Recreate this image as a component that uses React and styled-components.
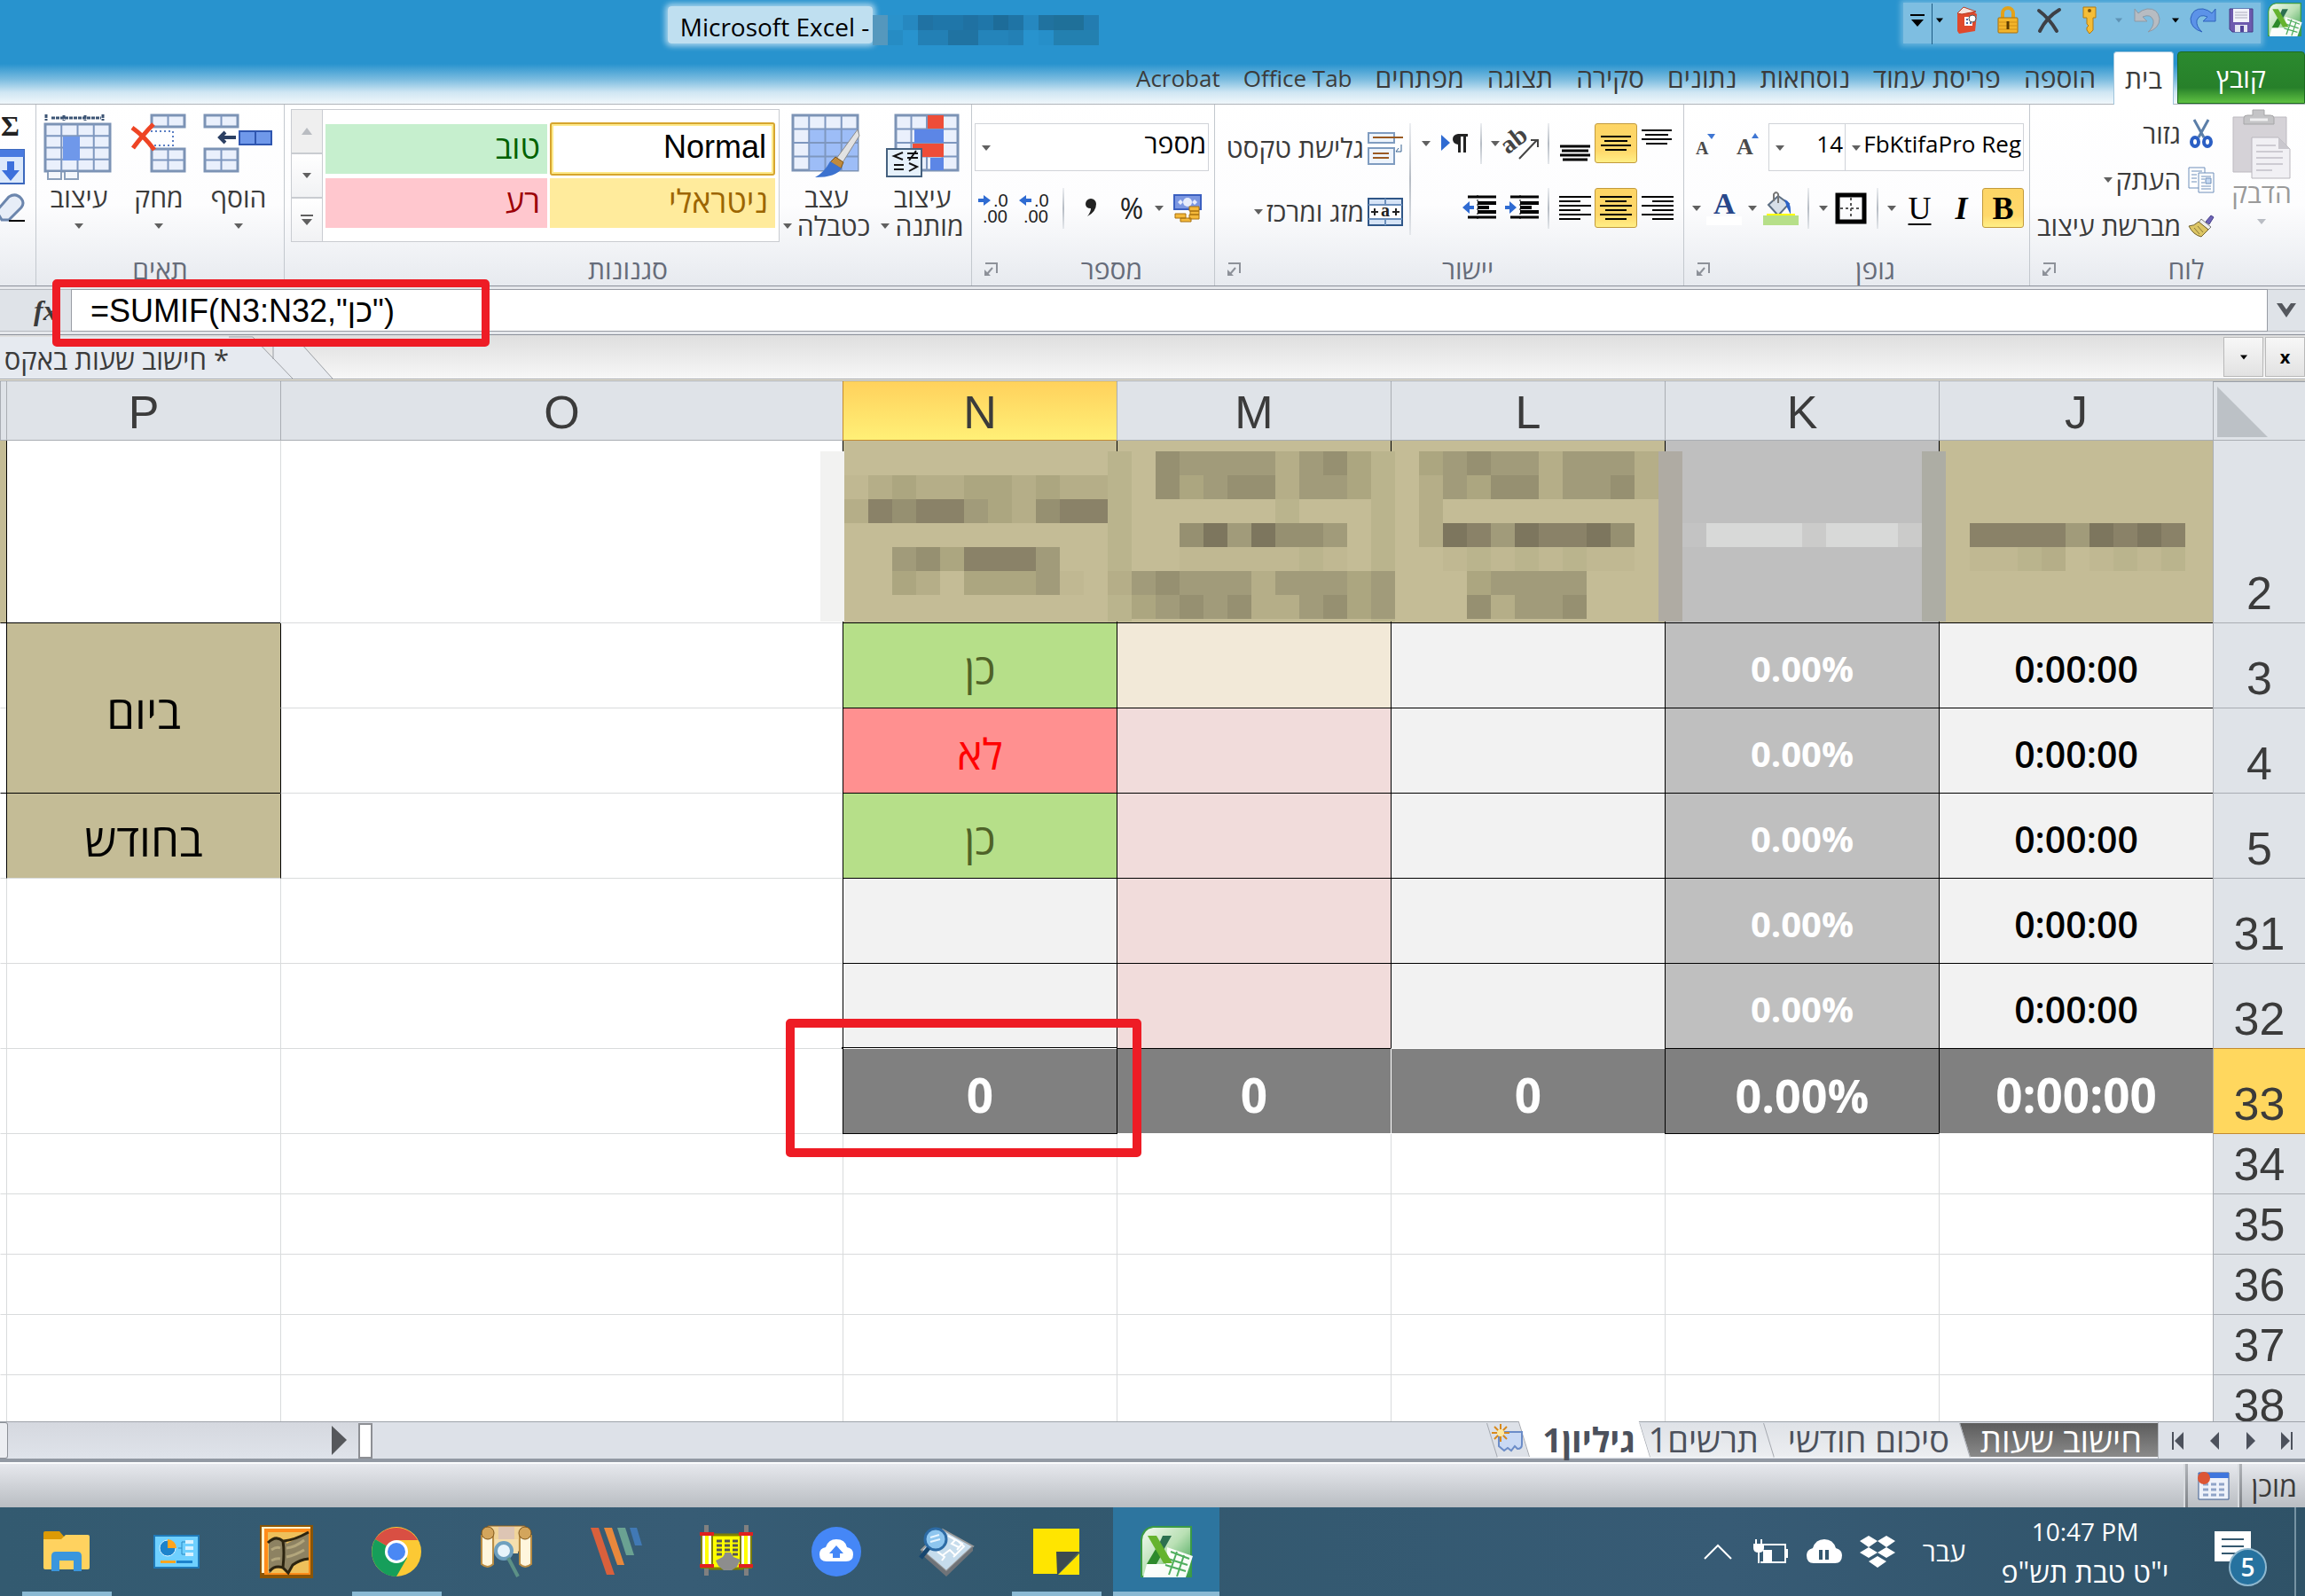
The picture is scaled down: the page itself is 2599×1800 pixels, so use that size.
import styled, { ThemeProvider, createGlobalStyle, css } from "styled-components";

// Theme definition
const theme = {
  ui: '"Open Sans", "Noto Sans", sans-serif',
  grid: '"Liberation Sans", Arial, sans-serif',
  blue: "#2893ce",
  chrome: "#dfe3e8",
  line: "#a9adb3",
  gridLine: "#d9dbdc",
  text: "#3b3b3b",
  tan: "#c4bc96",
  mark: "#ee1c25",
  orange: "#c28a30",
};

// Global styles
const GlobalStyle = createGlobalStyle`
  * {
    margin: 0;
    padding: 0;
    box-sizing: border-box;
  }

  body {
    font-family: ${(props) => props.theme.ui};
    background: #ffffff;
    overflow: hidden;
  }

  button, input, select {
    font: inherit;
    color: inherit;
    border: none;
    background: none;
    outline: none;
  }

  svg {
    display: block;
    flex: none;
    direction: ltr;
    overflow: visible;
  }
`;

const Window = styled.div`
  height: 100vh;
  display: flex;
  flex-direction: column;
  color: ${(props) => props.theme.text};
  font-size: 30px;
  line-height: 32px;
`;

/* ---------- title bar and tabs ---------- */

const Top = styled.header`
  flex: none;
  background: linear-gradient(${(props) => props.theme.blue} 72px, #7dbde0 90px, #cfe6f3 104px, #f0f7fb 117px);
`;

const TitleBar = styled.div`
  height: 58px;
  display: flex;
  align-items: flex-start;
  padding: 3px 4px 0 0;
`;

const QuickBar = styled.div`
  height: 46px;
  display: flex;
  align-items: center;
  margin-right: 8px;
  padding-bottom: 6px;
  background: rgba(255, 255, 255, 0.4);
  box-shadow: 0 0 6px 3px rgba(255, 255, 255, 0.3);
`;

const QuickButton = styled.button`
  width: ${(props) => props.$w}px;
  height: 38px;
  display: flex;
  align-items: center;
  justify-content: center;
`;

const QuickRule = styled.span`
  width: 1px;
  height: 46px;
  margin: 8px 0 0;
  background: #1d5c83;
`;

const TitleArea = styled.div`
  flex: 1;
  direction: ltr;
  display: flex;
  justify-content: center;
  padding: 4px 154px 0 0;
`;

const Title = styled.h1`
  height: 42px;
  padding: 6px 4px 0 14px;
  font-size: 28px;
  font-weight: 400;
  line-height: 34px;
  color: #000000;
  background: rgba(255, 255, 255, 0.7);
  box-shadow: 0 0 6px 3px rgba(255, 255, 255, 0.6);
  border-radius: 4px;
`;

const TitleMosaic = styled.svg`
  margin-top: 10px;
`;

const TabRow = styled.nav`
  display: flex;
  height: 60px;
  border-bottom: 1px solid #b0b4ba;
`;

const FileTab = styled.button`
  width: 144px;
  height: 59px;
  color: #ffffff;
  border: 1px solid #1d6a21;
  border-radius: 4px 4px 0 0;
  background: linear-gradient(#2b8a2f, #27802a 70%, #5fc142);
`;

const RibbonTab = styled.button`
  padding: 0 13px;
  height: 60px;
  white-space: nowrap;
  font-size: ${(props) => (props.$latin ? 26 : 30)}px;
  ${(props) =>
    props.$active &&
    css`
      width: 68px;
      margin: 0 4px 0 7px;
      background: #ffffff;
      border: 1px solid #9fc4dc;
      border-bottom: none;
      border-radius: 4px 4px 0 0;
      padding: 0;
    `}
`;

/* ---------- ribbon ---------- */

const Ribbon = styled.section`
  flex: none;
  display: flex;
  height: 205px;
  overflow: hidden;
  background: linear-gradient(#ffffff 0%, #fdfdfe 55%, #e7eaef 100%);
  border-bottom: 1px solid #8b909a;
`;

const Group = styled.section`
  flex: none;
  width: ${(props) => props.$w}px;
  display: flex;
  flex-direction: column;
  border-left: 1px solid #c3c8ce;
`;

const GroupBody = styled.div`
  flex: 1;
  min-height: 0;
  display: flex;
  padding: ${(props) => props.$pad || "0"};
`;

const GroupFoot = styled.footer`
  height: 36px;
  display: flex;
  align-items: center;
  color: #666c7a;

  span {
    flex: 1;
    text-align: center;
  }
`;

const Launcher = styled.button`
  width: 42px;
  height: 30px;
  display: flex;
  align-items: center;
  justify-content: center;
`;

const Stack = styled.div`
  display: flex;
  flex-direction: column;
  gap: ${(props) => props.$gap || 0}px;
  padding-top: ${(props) => props.$top || 0}px;
`;

const ToolRow = styled.div`
  height: ${(props) => props.$h || 45}px;
  display: flex;
  align-items: flex-start;
`;

const Tool = styled.button`
  flex: none;
  width: ${(props) => props.$w || 46}px;
  height: 45px;
  display: flex;
  align-items: center;
  justify-content: center;
  ${(props) =>
    props.$on &&
    css`
      background: linear-gradient(#fdd565, #ffd86b 70%, #ffef86);
      border: 1px solid #c29a3c;
      border-radius: 3px;
    `}
`;

const Rule = styled.span`
  flex: none;
  width: 2px;
  height: ${(props) => props.$h || 46}px;
  margin: 0 7px;
  background: linear-gradient(#eceef1, #b6bcc4, #e4e7eb);
`;

const BigButton = styled.button`
  width: ${(props) => props.$w}px;
  display: flex;
  flex-direction: column;
  align-items: center;
  padding-top: ${(props) => props.$top || 11}px;
  color: ${(props) => (props.$off ? "#9a9a9a" : props.theme.text)};
  white-space: nowrap;
`;

const BigArt = styled.span`
  height: 78px;
`;

const BigLine = styled.span`
  height: 32px;
  display: flex;
  align-items: center;
  gap: 6px;
`;

const TextButton = styled.button`
  height: 52px;
  display: flex;
  align-items: center;
  gap: 4px;
  white-space: nowrap;
`;

const IconBox = styled.span`
  width: 38px;
  display: flex;
  justify-content: center;
`;

const Field = styled.label`
  position: relative;
  width: ${(props) => props.$w}px;
  height: 54px;
  border: 1px solid #d0d3d8;
  margin-left: -1px;
  background: #ffffff;
  color: #000000;

  select {
    appearance: none;
    width: 100%;
    height: 44px;
    padding: 0 2px 0 0;
    font-size: ${(props) => (props.$latin ? 26 : 30)}px;
  }

  svg {
    position: absolute;
    left: 7px;
    top: 24px;
  }
`;

const Gallery = styled.div`
  display: flex;
  margin: 5px 0 0 7px;
`;

const Styles = styled.div`
  width: 516px;
  height: 150px;
  display: grid;
  grid-template-columns: 254px 250px;
  grid-auto-rows: 57px;
  gap: 4px 3px;
  padding: 16px 4px 0 0;
  border: 1px solid #c9ccd1;
  background: #ffffff;
`;

const StyleChip = styled.button`
  height: 56px;
  padding: 0 8px 4px 0;
  text-align: right;
  font-size: 36px;
  font-family: ${(props) => (props.$on ? props.theme.grid : props.theme.ui)};
  color: ${(props) => props.$fg};
  background: ${(props) => props.$bg};
  ${(props) =>
    props.$on &&
    css`
      height: 60px;
      margin-top: -2px;
      border: 2px solid #d6a52e;
      border-radius: 3px;
      box-shadow: inset 0 0 0 2px #fde98a;
    `}
`;

const Scroller = styled.div`
  width: 35px;
  display: flex;
  flex-direction: column;

  button {
    height: 50px;
    display: flex;
    align-items: center;
    justify-content: center;
    border: 1px solid #c9ccd1;
    border-right: none;
    background: linear-gradient(#ffffff, #f1f2f4);
  }

  button:first-child {
    background: #efefef;
  }
`;

/* ---------- formula bar ---------- */

const FormulaBar = styled.div`
  flex: none;
  height: 55px;
  padding: 3px 0;
  display: flex;
  background: #e6e8ec;
  border-bottom: 1px solid #8b909a;
`;

const FormulaField = styled.div`
  position: relative;
  flex: 1;
  border: 1px solid #989ca4;

  input {
    width: 100%;
    height: 100%;
    padding: 2px 21px 0;
    direction: ltr;
    background: #ffffff;
    color: #000000;
    font-family: ${(props) => props.theme.grid};
    font-size: 36px;
  }
`;

const Mark = styled.span`
  position: absolute;
  z-index: 5;
  pointer-events: none;
  border: ${(props) => props.$thick}px solid ${(props) => props.theme.mark};
  border-radius: 5px;
  inset: ${(props) => props.$inset};
  width: ${(props) => props.$w || "auto"};
`;

const BarEnd = styled.button`
  width: ${(props) => props.$w}px;
  display: flex;
  align-items: center;
  justify-content: center;
  background: ${(props) => props.theme.chrome};
  border: 1px solid #b4b8be;
  border-width: 1px 0;
  font: italic 700 32px "Liberation Serif", serif;
`;

const FxButton = styled(BarEnd)`
  justify-content: flex-end;
  padding-left: 38px;
`;

/* ---------- document tabs ---------- */

const DocTabs = styled.div`
  flex: none;
  height: 50px;
  display: flex;
  gap: 2px;
  overflow: hidden;
  background: linear-gradient(#dedede, #f7f7f7);
  border-bottom: 1px solid #9a9ea4;
`;

const DocButton = styled.button`
  width: 45px;
  height: 45px;
  margin-top: 2px;
  display: flex;
  align-items: center;
  justify-content: center;
  border: 1px solid #b9b9b9;
  background: linear-gradient(#f7f7f7, #e2e2e2);
  color: #000000;
  font-size: 20px;
  font-weight: 700;
`;

const DocTab = styled.a`
  width: 376px;
  margin-right: auto;
  display: flex;
  color: inherit;
  text-decoration: none;
  white-space: nowrap;

  span {
    flex: 1;
    margin-top: 2px;
    padding-top: 9px;
    font-size: 31px;
    background: #e6eaf0;
  }
`;

/* ---------- sheet ---------- */

const SheetArea = styled.main`
  flex: 1;
  min-height: 0;
  overflow: hidden;
  border-top: 1px solid #fff8e2;
  box-shadow: inset 0 1px 0 #a3a7ad;
  padding-top: 1px;
`;

const Sheet = styled.table`
  width: 100%;
  table-layout: fixed;
  border-collapse: separate;
  border-spacing: 0;
`;

const ColHead = styled.th`
  height: 67px;
  font: 400 52px/52px ${(props) => props.theme.grid};
  padding-top: 4px;
  border-left: 1px solid ${(props) => (props.$on ? props.theme.orange : props.theme.line)};
  border-bottom: 1px solid ${(props) => (props.$on ? props.theme.orange : props.theme.line)};
  background: ${(props) => (props.$on ? "linear-gradient(#ffd15c, #fff077)" : props.theme.chrome)};
`;

const Corner = styled.th`
  vertical-align: bottom;
  background: ${(props) => props.theme.chrome};
  border: 1px solid ${(props) => props.theme.line};
  border-right: none;

  svg {
    margin: 0 auto 3px 4px;
  }
`;

const RowHead = styled.th`
  height: ${(props) => props.$h}px;
  vertical-align: bottom;
  padding-bottom: 7px;
  font: 400 52px/52px ${(props) => props.theme.grid};
  border-left: 1px solid ${(props) => props.theme.line};
  border-bottom: 1px solid ${(props) => (props.$edge ? props.theme.orange : props.theme.line)};
  background: ${(props) => (props.$on ? "#ffd75e" : props.theme.chrome)};
`;

const Cell = styled.td`
  position: relative;
  text-align: center;
  vertical-align: middle;
  padding-top: ${(props) => (props.$size > 51 ? 9 : 6)}px;
  line-height: 56px;
  font-size: ${(props) => props.$size || 40}px;
  font-weight: ${(props) => props.$weight || 500};
  color: ${(props) => props.$fg || "#000000"};
  background: ${(props) => props.$bg || "#ffffff"};
  border-left: 1px solid ${(props) => props.$left || props.theme.gridLine};
  border-bottom: 1px solid ${(props) => props.$bottom || props.theme.gridLine};
`;

const Selection = styled.span`
  position: absolute;
  inset: -2px -1px -2px -2px;
  border: 2px solid #000000;
  border-top: 1px solid #000000;
  border-right-width: 1px;
  box-shadow: inset 0 1px 0 #ffffff;
`;

const HeadMosaic = styled.svg`
  position: absolute;
  right: 31px;
  top: 12px;
  z-index: 2;
`;

/* ---------- sheet tabs, status bar ---------- */

const SheetTabs = styled.nav`
  flex: none;
  height: 46px;
  display: flex;
  background: #dde1e8;
  border-top: 1px solid #9da2a9;
  border-bottom: 4px solid #9299a3;
`;

const NavButtons = styled.div`
  position: relative;
  z-index: 6;
  display: flex;
  width: 166px;
  background: #dde1e8;
  border-left: 1px solid #b4b8be;

  button {
    width: 41px;
    display: flex;
    align-items: center;
    justify-content: center;
  }
`;

const SheetTab = styled.button`
  position: relative;
  z-index: ${(props) => props.$z};
  width: ${(props) => props.$w}px;
  height: 40px;
  padding: 0 ${(props) => props.$pad}px 2px 0;
  text-align: right;
  white-space: nowrap;
  font-size: 38px;
  font-weight: ${(props) => (props.$bold ? 700 : 400)};
  color: ${(props) => props.$fg || "#4c515c"};

  &::before {
    content: "";
    position: absolute;
    z-index: -1;
    inset: ${(props) => (props.$bold ? "-1px 0 0 0" : "1px -8px 0 0")};
    transform: skewX(17deg);
    background: ${(props) => props.$bg};
    border-left: 1px solid #a4a8af;
    border-bottom: 1px solid #f7f8fa;
  }
`;

const HScroll = styled.div`
  display: flex;
  align-items: center;
  margin-right: auto;
  width: 420px;
`;

const Grip = styled.span`
  width: 16px;
  height: 40px;
  border: 2px solid #8d8f94;
  background: #ffffff;
`;

const Track = styled.span`
  flex: 1;
  height: 41px;
  background: linear-gradient(#d5d8df, #dfe3ea);
`;

const Thumb = styled.span`
  width: 9px;
  height: 41px;
  border: 1px solid #8d9198;
  border-left: none;
  border-radius: 0 3px 3px 0;
  background: #eceef2;
`;

const ScrollArrow = styled.button`
  padding: 0 13px 0 12px;
  height: 41px;
  background: linear-gradient(#d5d8df, #dfe3ea);
`;

const StatusBar = styled.footer`
  flex: none;
  height: 51px;
  display: flex;
  align-items: center;
  padding-right: 9px;
  font-size: 32px;
  border-top: 2px solid #fbfcfd;
  background: linear-gradient(#e6e8ed, #b9bdc2);
`;

const StatusRule = styled.span`
  width: 3px;
  height: 49px;
  margin: 0 11px;
  background: linear-gradient(#b0b3b8, #7f8388);
  box-shadow: -2px 0 0 #d9dce0;
`;

/* ---------- taskbar ---------- */

const Taskbar = styled.footer`
  flex: none;
  direction: ltr;
  height: 100px;
  display: flex;
  padding-left: 15px;
  color: #ffffff;
  background: linear-gradient(90deg, #335a70, #375c75 30%, #32586e 45%, #375b75 75%, #2f5267);
`;

const Task = styled.button`
  width: 120px;
  margin-right: 4px;
  display: flex;
  align-items: center;
  justify-content: center;
  background: linear-gradient(#8ab9d3, #8ab9d3) center bottom / ${(props) => (props.$open ? 101 : 0)}px 5px no-repeat;
  ${(props) =>
    props.$active &&
    css`
      background: #2d759f;
      border-bottom: 5px solid #8ab9d3;
      padding-top: 5px;
    `}
`;

const Tray = styled.div`
  margin-left: auto;
  display: flex;
  align-items: center;
  padding-right: 10px;
`;

const TrayButton = styled.button`
  width: ${(props) => props.$w || 60}px;
  height: 60px;
  display: flex;
  align-items: center;
  justify-content: center;
`;

const Clock = styled.time`
  width: 200px;
  margin: 0 44px 0 14px;
  text-align: center;
  font-size: 28px;
  line-height: 46px;
  white-space: nowrap;
`;

const HebrewDate = styled.div`
  direction: rtl;
  font-size: 32px;
`;

const Notice = styled.button`
  position: relative;
  width: 92px;
  height: 60px;
  padding-left: 2px;
`;

const Badge = styled.span`
  position: absolute;
  left: 18px;
  top: 26px;
  width: 43px;
  height: 43px;
  border: 2px solid #8fb8cf;
  border-radius: 50%;
  background: #26729f;
  font-size: 28px;
  font-weight: 600;
  line-height: 38px;
`;

const DesktopEdge = styled.span`
  width: 2px;
  align-self: stretch;
  background: #7793a3;
`;

/* ---------- drawings ---------- */

const Caret = ({ color = "#606060", w = 10 }) => (
  <svg width={w} height="6" viewBox="0 0 10 6">
    <path d="M0 0h10L5 6z" fill={color} />
  </svg>
);

const Lines = ({ rows, width = 36, height = 27, step = 5, thick = 2 }) => (
  <svg width={width} height={height}>
    {rows.map(([x, w], i) => (
      <rect key={i} x={x} y={i * step} width={w} height={thick} fill="#000" />
    ))}
  </svg>
);

const ALIGN = {
  right: [[0, 36], [12, 24], [0, 36], [12, 24], [0, 36], [12, 24]],
  center: [[0, 36], [6, 24], [0, 36], [6, 24], [0, 36], [6, 24]],
  left: [[0, 36], [0, 24], [0, 36], [0, 24], [0, 36], [0, 24]],
  three: [[0, 34], [4, 26], [0, 34], [5, 24]],
};

const LauncherIcon = () => (
  <svg width="16" height="16" fill="none" stroke="#8d9199" strokeWidth="2">
    <path d="M2 1h13v11" />
    <path d="M10 6l-6 7" />
    <path d="M1 8v7h7z" fill="#8d9199" stroke="none" />
  </svg>
);

const ExcelIcon = ({ size }) => (
  <svg width={size} height={size} viewBox="0 0 58 58">
    <defs>
      <linearGradient id="xl" x1="0" y1="0" x2="1" y2="1">
        <stop offset="0" stopColor="#f4faf2" />
        <stop offset="0.5" stopColor="#b9e0b4" />
        <stop offset="1" stopColor="#2f9a45" />
      </linearGradient>
    </defs>
    <path d="M14 1H57V57H1V16Q2 3 14 1Z" fill="url(#xl)" stroke="#3a9a45" strokeWidth="2" />
    <path d="M30 24l29 10-8 24H3l4-15h22z" fill="#fff" opacity=".95" />
    <path d="M34 29l21 8M31 37l22 7M28 44l23 7M41 29l-9 26M49 33l-8 24" stroke="#4fae5e" strokeWidth="2" />
    <path d="M25 11h10l-9 16-5-7z" fill="#2c7050" />
    <path d="M7 43l10-17 6 8-5 9z" fill="#2e8a2b" />
    <path d="M8 11h10l18 31H26z" fill="#65b32e" />
  </svg>
);

const BookIcon = () => (
  <svg width="26" height="30">
    <path d="M2 7L20 5l4 3-2 19-18 3-2-3z" fill="#e0492c" />
    <path d="M2 7l7-7 14 5-16 3z" fill="#f6e4de" stroke="#b83a22" />
    <path d="M10 11h9v10h-9z" fill="#fff" />
    <path d="M12 13h2v2h-2zM12 17h2v2h-2zM16 17h2v2h-2z" fill="#4a69a8" />
    <circle cx="19" cy="13" r="4" fill="#fff" stroke="#555" />
  </svg>
);

const LockIcon = () => (
  <svg width="26" height="30">
    <path d="M7 14V7a6 6 0 0 1 12 0v7" fill="none" stroke="#e3a21a" strokeWidth="4" />
    <rect x="2" y="12" width="22" height="17" rx="1" fill="#f3b52b" stroke="#a86f0a" />
    <path d="M3 17h20M3 21h20M3 25h20" stroke="#d08f18" />
    <path d="M13 16v9" stroke="#5b3a00" strokeWidth="3" />
  </svg>
);

const CrossIcon = () => (
  <svg width="28" height="28" fill="none" stroke="#3d4046" strokeLinecap="round">
    <path d="M3 3q12 9 20 23" strokeWidth="4" />
    <path d="M26 2Q12 10 4 26" strokeWidth="4" />
  </svg>
);

const KeyIcon = () => (
  <svg width="18" height="32">
    <path d="M2 1h14v12h-3v14l-4 4-3-4v-3l2-2-2-2v-7H2z" fill="#f5bd36" stroke="#b37b10" />
    <circle cx="9" cy="5" r="2" fill="#7a5410" />
  </svg>
);

const TurnIcon = ({ flip, fill, edge }) => (
  <svg width="32" height="30" viewBox="0 0 32 30">
    <g transform={flip ? "translate(32 0) scale(-1 1)" : undefined}>
      <path d="M2 2v14h14l-5-5q9-4 12 4 1 7-6 13 13-4 13-15Q28 1 16 2 10 3 6 7z" fill={fill} stroke={edge} />
    </g>
  </svg>
);

const SaveIcon = () => (
  <svg width="28" height="28">
    <path d="M1 1h26v26H4l-3-3z" fill="#6d5aae" stroke="#483a86" />
    <path d="M5 1h18v15H5z" fill="#f2f3fa" />
    <path d="M7 5h14M7 8h14M7 11h14" stroke="#aab" />
    <path d="M7 19h14v8H7z" fill="#e4e6f2" />
    <path d="M13 20h4v7h-4z" fill="#51449a" />
  </svg>
);

const PasteIcon = () => (
  <svg width="66" height="78">
    <path d="M1 8h60v62H1z" fill="#d5d2d7" stroke="#bdbac0" />
    <path d="M13 16V9q0-3 4-3h6V0h13v6h7q4 0 4 3v7z" fill="#c4c4c6" stroke="#a6a6a8" />
    <path d="M20 11h20" stroke="#efeff0" strokeWidth="3" />
    <path d="M22 31h30l13 13v33H22z" fill="#f1f0f4" stroke="#b9b6bd" />
    <path d="M52 31v13h13z" fill="#c9c7cd" />
    <path d="M27 40h22M27 47h30M27 54h30M27 61h30M27 68h18" stroke="#cdcbd2" strokeWidth="2" />
  </svg>
);

const CutIcon = () => (
  <svg width="26" height="34" fill="none">
    <path d="M5 1l11 20M21 1L10 21" stroke="#5b7ea8" strokeWidth="3" />
    <ellipse cx="6" cy="26" rx="4" ry="5" stroke="#2b5fc4" strokeWidth="4" />
    <ellipse cx="20" cy="26" rx="4" ry="5" stroke="#2b5fc4" strokeWidth="4" />
  </svg>
);

const CopyIcon = () => (
  <svg width="30" height="30" fill="#fff" stroke="#6f8fba">
    <path d="M1 1h18v23H1z" />
    <path d="M4 5h12M4 9h6M4 13h6M4 17h6" />
    <path d="M12 7h17v22H12z" />
    <path d="M15 11h11M15 14h4M15 18h4M15 22h11M15 25h11" />
    <path d="M20 13h6v6h-6z" fill="#c6d9f2" />
  </svg>
);

const BrushIcon = () => (
  <svg width="30" height="26">
    <path d="M20 8l6-7 3 2-5 8z" fill="#6d62b5" stroke="#46408a" />
    <path d="M15 5l11 9-3 3-11-8z" fill="#efefef" stroke="#777" />
    <path d="M12 8l11 9-8 8Q6 23 1 13q6 0 11-5z" fill="#dcc564" stroke="#72612a" />
    <path d="M7 15l6 7M11 13l6 7" stroke="#8c7a37" />
  </svg>
);

const GrowIcon = ({ down }) => (
  <svg width="28" height="30">
    <text x="0" y="27" fontFamily="Liberation Serif" fontWeight="700" fontSize={down ? 20 : 26} fill="#4a4a4a">
      A
    </text>
    <path d={down ? "M13 4h9l-4 6z" : "M17 9h8l-4-6z"} fill="#3f76d3" />
  </svg>
);

const Letter = styled.span`
  font: 700 36px/40px "Liberation Serif", serif;
  color: #000000;
  font-style: ${(props) => (props.$italic ? "italic" : "normal")};
  font-weight: ${(props) => (props.$light ? 400 : 700)};
  text-decoration: ${(props) => (props.$under ? "underline" : "none")};
  text-decoration-thickness: 2px;
  text-underline-offset: 5px;
`;

const Percent = styled.span`
  font-size: 32px;
  color: #222222;
`;

const BordersIcon = () => (
  <svg width="34" height="34" fill="none">
    <path d="M2 2h30v30H2z" stroke="#000" strokeWidth="5" />
    <path d="M17 5v24M5 17h24" stroke="#555" strokeWidth="2" strokeDasharray="3 3" />
  </svg>
);

const FillIcon = () => (
  <svg width="40" height="38">
    <path d="M6 15L17 5l12 9-12 13z" fill="#d7dfe8" stroke="#5e6f84" strokeWidth="2" />
    <path d="M12 11V3q3-4 5 0v10" fill="none" stroke="#777" strokeWidth="2" />
    <path d="M24 9q8 2 7 17l-4-8z" fill="#2c63c9" />
    <path d="M4 25h32v3H4z" fill="#ffff00" />
    <path d="M0 27h40v11H0z" fill="#b6df89" />
  </svg>
);

const FontColorIcon = () => (
  <svg width="40" height="38">
    <text x="8" y="25" fontFamily="Liberation Serif" fontWeight="700" fontSize="34" fill="#28478a">
      A
    </text>
    <path d="M0 28h40v10H0z" fill="#fff" />
  </svg>
);

const AngleIcon = () => (
  <svg width="42" height="38">
    <text x="2" y="26" transform="rotate(-38 12 24)" fontFamily="Liberation Serif" fontWeight="700" fontSize="29" fill="#444">
      ab
    </text>
    <path d="M18 36L38 15M31 15h8v8" fill="none" stroke="#444" strokeWidth="2" />
  </svg>
);

const PilcrowIcon = () => (
  <svg width="32" height="24">
    <path d="M1 2l10 9-10 9z" fill="#2f6bd2" />
    <path d="M20 1h11v3h-2v18h-3V4h-3v18h-3V13q-6-1-6-6t6-6z" fill="#222" />
  </svg>
);

const IndentIcon = ({ left }) => (
  <svg width="38" height="30">
    <path d="M6 2h32M6 25h32" stroke="#000" strokeWidth="3" />
    <path d="M17 9h21M17 14h13M17 19h21" stroke="#000" strokeWidth="4" />
    <path d="M17 0v30" stroke="#000" strokeDasharray="2 3" />
    <path d={left ? "M0 14l8-7v5h5v4H8v5z" : "M13 14L5 7v5H0v4h5v5z"} fill="#2f6bd2" />
  </svg>
);

const WrapIcon = () => (
  <svg width="40" height="38">
    <path d="M1 2h29v11H1zM1 19h29v18H1z" fill="#eef4fc" stroke="#7f9cc0" strokeWidth="2" />
    <path d="M6 7h34M6 25h18M6 30h18" stroke="#9a5a22" strokeWidth="2" />
    <path d="M38 15v8h-6l3-4" fill="none" stroke="#35608f" />
  </svg>
);

const MergeIcon = () => (
  <svg width="40" height="32">
    <path d="M1 1h38v30H1z" fill="#d6e4f6" stroke="#2f5688" strokeWidth="2" />
    <path d="M1 8h38M1 24h38M20 1v7M20 24v7" stroke="#6d91bd" strokeWidth="2" />
    <path d="M2 9h36v14H2z" fill="#fff" />
    <path d="M4 16h8M8 12v8M28 16h8M32 12v8" stroke="#222" strokeWidth="2" />
    <text x="15" y="21" fontFamily="Liberation Serif" fontWeight="700" fontSize="20" fill="#222">
      a
    </text>
  </svg>
);

const MoneyIcon = () => (
  <svg width="32" height="32">
    <path d="M1 1h30v16H1z" fill="#7c97e2" stroke="#3b5fc0" strokeWidth="2" />
    <ellipse cx="16" cy="9" rx="5" ry="5" fill="#e7ecfb" />
    <path d="M5 9l3-3 3 3-3 3zM21 9l3-3 3 3-3 3z" fill="#e7ecfb" />
    <g fill="#f5b93a" stroke="#a8700f">
      <path d="M18 14h11v5H18zM19 19h10v4H19zM18 23h11v5H18zM2 22h12v5H2zM8 27h12v4H8z" />
    </g>
  </svg>
);

const DecimalIcon = ({ left }) => (
  <svg width="38" height="40">
    <path d={left ? "M0 11l8-6v4h6v4H8v4z" : "M14 11L6 5v4H0v4h6v4z"} fill="#2f6bd2" />
    <g fontFamily="Liberation Sans" fontSize="20" fill="#222">
      <text x="17" y="18">.0</text>
      <text x="5" y="36">.00</text>
    </g>
  </svg>
);

const GridArt = ({ w, h, cols, rows, children }) => (
  <g>
    <path d={`M1 1h${w}v${h}H1z`} fill="#eaf0fc" stroke="#7c93b5" strokeWidth="3" />
    {children}
    <g stroke="#7e97bf" strokeWidth="2">
      {Array.from({ length: cols - 1 }, (_, i) => (
        <path key={i} d={`M${1 + ((i + 1) * w) / cols} 1v${h}`} />
      ))}
      {Array.from({ length: rows - 1 }, (_, i) => (
        <path key={i} d={`M1 ${1 + ((i + 1) * h) / rows}h${w}`} />
      ))}
    </g>
  </g>
);

const ConditionalIcon = () => (
  <svg width="82" height="72">
    <g transform="translate(10 0)">
      <GridArt w={70} h={62} cols={4} rows={4} />
      <path d="M37 1h18v15H37zM20 33h35v15H20z" fill="#ee4d38" />
      <path d="M22 17h33v15H22zM40 49h15v14H40z" fill="#5c86e6" />
    </g>
    <path d="M1 39h39v31H1z" fill="#e6f1fb" stroke="#45617f" strokeWidth="2" />
    <path d="M19 43L9 47l10 4M24 49h12M24 44h12M34 41l-8 11M9 57h11M9 62h11M26 55l9 4-9 5" fill="none" stroke="#111" strokeWidth="2" />
  </svg>
);

const TableStyleIcon = () => (
  <svg width="78" height="72">
    <GridArt w={73} h={62} cols={4} rows={4}>
      <path d="M20 17h54v46H20z" fill="#9dbdf7" />
    </GridArt>
    <path d="M74 17L50 50l6 6 20-32z" fill="#e2e2e2" stroke="#8b8b8b" />
    <path d="M49 48l9 6-3 7-12-7z" fill="#c08a3c" stroke="#7d5419" />
    <path d="M43 53l13 8q-6 10-30 10 10-5 17-18z" fill="#3c72cf" />
  </svg>
);

const InsertCellsIcon = () => (
  <svg width="78" height="72">
    <GridArt w={37} h={13} cols={2} rows={1} />
    <g transform="translate(0 38)">
      <GridArt w={37} h={25} cols={2} rows={2} />
    </g>
    <path d="M40 19h36v15H40z" fill="#6f98ea" stroke="#2f56b0" strokeWidth="2" />
    <path d="M58 19v15" stroke="#2f56b0" strokeWidth="2" />
    <path d="M17 26h19M24 20l-6 6 6 6" fill="none" stroke="#2b3f63" strokeWidth="4" />
  </svg>
);

const DeleteCellsIcon = () => (
  <svg width="62" height="72">
    <g transform="translate(22 0)">
      <GridArt w={37} h={13} cols={2} rows={1} />
    </g>
    <g transform="translate(22 38)">
      <GridArt w={37} h={25} cols={2} rows={2} />
    </g>
    <path d="M22 19h25v16H22" fill="none" stroke="#5b7fc4" strokeWidth="2" strokeDasharray="2 3" />
    <path d="M1 15q14 10 25 25M25 11Q14 22 2 38" fill="none" stroke="#ee4424" strokeWidth="5" />
  </svg>
);

const FormatCellsIcon = () => (
  <svg width="78" height="76">
    <path d="M2 0v7M8 4h56M66 0v7M22 1v6M46 1v6" stroke="#3c5474" strokeWidth="3" strokeDasharray="4 1" />
    <g transform="translate(0 10)">
      <GridArt w={73} h={53} cols={4} rows={4} />
    </g>
    <path d="M21 25h19v27H21z" fill="#6f98ea" />
    <path d="M4 65v8h15v-8M23 65v8h15v-8" fill="#f4f7fc" stroke="#8ca0bb" strokeWidth="2" />
  </svg>
);

const EditIcons = () => (
  <svg width="30" height="130">
    <text x="1" y="27" fontFamily="Liberation Serif" fontWeight="700" fontSize="32" fill="#222">
      Σ
    </text>
    <path d="M-8 43h35v38H-8z" fill="#dce9fb" stroke="#3c68bd" strokeWidth="2" />
    <path d="M-8 43h35v8H-8z" fill="#4a7be0" />
    <path d="M8 56h8v10h6L12 78 2 66h6z" fill="#3c70dc" />
    <path d="M-4 112L10 96q8-5 14 2 4 5 0 10l-14 14H2z" fill="#e7edf7" stroke="#6c86ad" strokeWidth="3" />
    <path d="M10 123h18" stroke="#000" strokeWidth="2" />
  </svg>
);

const DropboxIcon = () => (
  <svg width="40" height="36" fill="#fff">
    <path d="M10 0l10 6-10 7L0 6zM30 0l10 6-10 7-10-7zM10 13l10 6-10 6L0 19zM30 13l10 6-10 6-10-6zM20 23l10 6-10 7-10-7z" />
  </svg>
);

const TASKS = [
  {
    name: "Explorer",
    open: true,
    art: (
      <svg width="54" height="46">
        <path d="M1 2q0-2 2-2h16l6 7-6 6H1z" fill="#dc9a05" />
        <path d="M1 9h20l5-5h25q2 0 2 2v35q0 2-2 2H3q-2 0-2-2z" fill="#ffd25f" />
        <path d="M10 45V28q0-5 5-5h24q5 0 5 5v17h-9V33H19v12z" fill="#3a96dd" />
      </svg>
    ),
  },
  {
    name: "Control panel",
    art: (
      <svg width="52" height="38">
        <path d="M1 1h50v36H1z" fill="#6fd0ff" stroke="#1f79b8" strokeWidth="2" />
        <circle cx="16" cy="15" r="9" fill="#1d83cc" stroke="#d4f0ff" />
        <path d="M16 15V5a10 10 0 0 1 10 10z" fill="#ffa51e" />
        <path d="M28 15h4V8h4M32 15v7h4" fill="none" stroke="#2a8ac4" />
        <path d="M36 6h9v4h-9zM36 13h9v4h-9zM36 20h9v4h-9z" fill="#d9f2ff" />
        <path d="M8 29h17v3H8z" fill="#ffa51e" />
        <path d="M26 29h18v3H26z" fill="#1d83cc" />
      </svg>
    ),
  },
  {
    name: "Book",
    art: (
      <svg width="60" height="60">
        <path d="M0 0h60v60H0z" fill="#8b5506" />
        <path d="M2 2h55v52H2z" fill="#fff3cf" />
        <path d="M5 4h52v52H5z" fill="#ff8c1a" />
        <path d="M9 8h46v46H9z" fill="#eec05b" />
        <path d="M10 54V20q8-8 16-2 4-2 4 3 12-6 25-13v31q-14 2-19 9l-5 6-6-5-9-1-4 6z" fill="#8d8262" />
        <path d="M9 20q9-9 17-2 2 12 0 30-9-3-15 4M27 18q12-1 28-10M26 48l6 6 5-9q8-6 18-7" fill="none" stroke="#2c2410" strokeWidth="3" />
        <path d="M30 26q10-1 20-9M30 36q10-2 20-8M13 28q6-4 10-2M13 40q6-3 10-2" fill="none" stroke="#b3a67c" strokeWidth="3" />
      </svg>
    ),
  },
  {
    name: "Chrome",
    open: true,
    art: (
      <svg width="56" height="56">
        <circle cx="28" cy="28" r="28" fill="#fcc934" />
        <path d="M28 28L4 14A28 28 0 0 1 52 15H28z" fill="#d94f43" />
        <path d="M4 14A28 28 0 0 0 28 56l12-21-12-7z" fill="#169e5a" />
        <circle cx="28" cy="28" r="13" fill="#fff" />
        <circle cx="28" cy="28" r="10" fill="#4a88f4" />
      </svg>
    ),
  },
  {
    name: "Scroll search",
    art: (
      <svg width="58" height="60">
        <path d="M8 1h42v29H8z" fill="#f0d49a" stroke="#8f5f20" />
        <path d="M20 2h18v14H20z" fill="#ddc5b4" />
        <path d="M16 16h26v16H16z" fill="#f5dfae" />
        <path d="M1 12h13v32q-6 6-13 0zM44 12h13v32q-7 6-13 0z" fill="#fff6dd" stroke="#b98d45" strokeWidth="2" />
        <circle cx="8" cy="9" r="7" fill="#d3a55c" stroke="#7d5419" />
        <circle cx="50" cy="9" r="7" fill="#d3a55c" stroke="#7d5419" />
        <circle cx="26" cy="29" r="9" fill="#e8f4fb" stroke="#6fa0be" strokeWidth="4" />
        <path d="M31 37l11 21" stroke="#5c9186" strokeWidth="4" />
      </svg>
    ),
  },
  {
    name: "Stripes",
    art: (
      <svg width="60" height="54">
        <path d="M1 0h9l18 53h-9z" fill="#d9603c" />
        <path d="M16 0h9l14 42h-8z" fill="#e8883c" />
        <path d="M31 0h9l10 31h-9z" fill="#6aa292" />
        <path d="M45 0h8l6 20h-8z" fill="#4179b5" />
      </svg>
    ),
  },
  {
    name: "Torah scroll",
    art: (
      <svg width="60" height="60">
        <path d="M12 11h36v38H12z" fill="#ffff00" stroke="#7f7f00" strokeWidth="3" />
        <path d="M2 10h12v38H2zM46 10h12v38H46z" fill="#fff" stroke="#7f7f00" strokeWidth="2" />
        <path d="M6 12h4v34H6zM50 12h4v34h-4z" fill="#ffff00" />
        <path d="M0 8h16v4H0zM44 8h16v4H44zM0 44h16v4H0zM44 44h16v4H44z" fill="#e02020" />
        <path d="M5 0h5v8H5zM50 0h5v8h-5zM5 49h5v8H5zM50 49h5v8h-5z" fill="#808080" />
        <path d="M19 18h24M19 23h24M19 28h24M19 33h24" stroke="#555" strokeWidth="3" strokeDasharray="6 3" />
        <path d="M18 40l8-4 3-5h6l3 5 8 3-4 8-6 4h-9l-6-5z" fill="#8d8d8d" />
      </svg>
    ),
  },
  {
    name: "Cloud backup",
    art: (
      <svg width="56" height="56">
        <circle cx="28" cy="28" r="28" fill="#4587f7" />
        <path d="M17 39q-8 0-8-8 0-7 7-8 3-9 12-9 10 0 12 9 7 1 7 8 0 8-8 8z" fill="#fff" />
        <path d="M28 21l8 9h-4v5h-8v-5h-4z" fill="#4587f7" />
      </svg>
    ),
  },
  {
    name: "Search board",
    art: (
      <svg width="60" height="56">
        <path d="M26 3L60 22 30 50 2 26z" fill="#c6dcec" stroke="#9a9a9a" strokeWidth="2" />
        <path d="M2 26l28 24 30-28v5L30 56 2 31z" fill="#6f7378" />
        <path d="M32 10l8 5-4 4 8 4M26 32l8-6 6 6M36 12l12 7-6 7M20 28l8 6-3 4M44 17l6 5-12 12" fill="none" stroke="#fff" strokeWidth="2" />
        <circle cx="18" cy="14" r="12" fill="#8ec6ef" stroke="#2d6ba5" strokeWidth="3" />
        <path d="M12 12l10-3M12 17l11-3" stroke="#e7f5ff" strokeWidth="2" />
        <path d="M10 24l-9 11" stroke="#17466f" strokeWidth="5" />
      </svg>
    ),
  },
  {
    name: "Sticky notes",
    open: true,
    art: (
      <svg width="52" height="52">
        <path d="M0 0h52v26L27 51H0z" fill="#ffe500" />
        <path d="M26 26h26L27 52z" fill="#3c4a50" />
        <path d="M52 28v24H28z" fill="#ffe500" />
      </svg>
    ),
  },
  { name: "Excel", active: true, art: <ExcelIcon size={58} /> },
];

/* ---------- blurred labels ---------- */

const TITLE_BLOCKS = [
  ["#5497bd", "#2a92cb", "#2688c0", "#2072a3", "#1f76a9", "#1f76a9", "#1f71a2", "#1f76a9", "#1d6c99", "#1f74a5", "#2688c0", "#20729f", "#1f7099", "#1f7099", "#237cb0"],
  ["#5598bd", "#268cc4", "#2893ce", "#2380b5", "#2380b5", "#2073a2", "#2073a2", "#2484ba", "#2484ba", "#2380b5", "#2893ce", "#268fc9", "#2380b0", "#2380b0", "#2380b0"],
];

const TONES = {
  w: "#f2f2f1",
  h: "#c0b892",
  g: "#bab48d",
  a: "#b5ae88",
  b: "#aca680",
  c: "#a19b7a",
  d: "#969071",
  e: "#8a8268",
  f: "#7d765e",
  G: "#afaba3",
  H: "#adada4",
  i: "#c3c3c3",
  j: "#d8d9d8",
  k: "#cbcbca",
  t: "#c4bc96",
  s: "#bfbfbf",
};

const HEAD_BLOCKS = [
  "wtttttttttttgtdccccacdbgtbcdccacccaGssssssssssH",
  "whabaabbabaagtdbcddaccbgtacbddaccdaGssssssssssH",
  "waedeecbadeegttttttgtttgtatttttttttGssssssssssH",
  "wtttttttttttgttdfcfddctgtafecfeefdtGijjjjkjjjkHteeeecfefe",
  "wttcdbeeecttgtthhhhhghtgtthghghghhtGssssssssssHthhgathghg",
  "wttbatbbbchtacdcccacccbctttbcccctttGssssssssssH",
  "wtttttttttttgbcdcdaacdbctttdaccdtttGssssssssssH",
  "wtttttttttttgttttttttttgtttttttttttGssssssssssH",
];

const BlockRows = ({ rows }) =>
  rows.map((row, y) =>
    row.split("").map((tone, x) => (
      <rect key={`${x}-${y}`} x={x * 27} y={y * 27} width="27" height={y === 7 ? 3 : 27} fill={TONES[tone]} />
    ))
  );

/* ---------- sheet data ---------- */

const DARK = "#808080";
const GREEN = { text: "כן", bg: "#b6df89", fg: "#4f6228" };
const RED = { text: "לא", bg: "#ff9090", fg: "#ff0000" };
const EMPTY = { bg: "#f2f2f2" };
const ROSE = "#f1dcdb";

const DATA_ROWS = [
  { n: 3, flag: GREEN, m: "#f2e9d8" },
  { n: 4, flag: RED, m: ROSE },
  { n: 5, flag: GREEN, m: ROSE },
  { n: 31, flag: EMPTY, m: ROSE },
  { n: 32, flag: EMPTY, m: ROSE },
];

const DataRow = ({ n, flag, m }) => {
  const side = n <= 5 ? "#000" : undefined;
  return (
    <tr>
      <RowHead scope="row" $h={96} $edge={n === 32}>{n}</RowHead>
      <Cell $bg="#f2f2f2" $left="#000" $bottom="#000" $size={41} $weight={600}>0:00:00</Cell>
      <Cell $bg="#bfbfbf" $fg="#fff" $left="#000" $bottom="#000" $weight={700} $size={40}>0.00%</Cell>
      <Cell $bg="#f2f2f2" $left="#000" $bottom={n === 32 ? "#fff" : "#000"} />
      <Cell $bg={m} $left="#000" $bottom="#000" />
      <Cell $bg={flag.bg} $fg={flag.fg} $left="#000" $bottom="#000" $size={48}>{flag.text}</Cell>
      <Cell $left={side} />
      {n === 3 && <Cell rowSpan={2} $bg={theme.tan} $left="#000" $bottom="#000" $size={51}>ביום</Cell>}
      {n === 5 && <Cell $bg={theme.tan} $left="#000" $size={51}>בחודש</Cell>}
      {n > 5 && <Cell />}
      <Cell $bottom={n === 4 ? "#000" : undefined} $left="#fff" />
    </tr>
  );
};

const MENU = ["הוספה", "פריסת עמוד", "נוסחאות", "נתונים", "סקירה", "תצוגה", "מפתחים"];
const LATIN_MENU = ["Office Tab", "Acrobat"];

const RibbonGroup = ({ w, pad, title, launcher, children }) => (
  <Group $w={w} aria-label={title}>
    <GroupBody $pad={pad}>{children}</GroupBody>
    <GroupFoot>
      <span>{title}</span>
      {launcher && (
        <Launcher aria-label={`${title} – עוד`}>
          <LauncherIcon />
        </Launcher>
      )}
    </GroupFoot>
  </Group>
);

const CaretTool = ({ w = 16, label = "עוד" }) => (
  <Tool $w={w} aria-label={label}>
    <Caret />
  </Tool>
);

// Tall ribbon button; without a second line the caret stands alone under the label
const Big = ({ w, top, off, art, first, second, caret }) => (
  <BigButton $w={w} $top={top} $off={off}>
    <BigArt>{art}</BigArt>
    <BigLine>{first}</BigLine>
    <BigLine>
      {second}
      <Caret color={caret} />
    </BigLine>
  </BigButton>
);

export default function App() {
  return (
    <ThemeProvider theme={theme}>
      <GlobalStyle />
      <Window dir="rtl" lang="he">
        <Top>
          <TitleBar>
            <ExcelIcon size={38} />
            <QuickBar>
              <QuickButton $w={44} aria-label="שמור"><SaveIcon /></QuickButton>
              <QuickButton $w={42} aria-label="בצע שוב"><TurnIcon flip fill="#5c93e8" edge="#2f62bd" /></QuickButton>
              <QuickButton $w={20} aria-label="עוד"><Caret color="#000" w={8} /></QuickButton>
              <QuickButton $w={44} aria-label="בטל"><TurnIcon fill="#b7bcc2" edge="#8d99a5" /></QuickButton>
              <QuickButton $w={20} aria-label="עוד"><Caret color="#5f93b5" w={8} /></QuickButton>
              <QuickButton $w={46} aria-label="מפתח"><KeyIcon /></QuickButton>
              <QuickButton $w={46} aria-label="סגור"><CrossIcon /></QuickButton>
              <QuickButton $w={46} aria-label="נעל"><LockIcon /></QuickButton>
              <QuickButton $w={46} aria-label="ספר"><BookIcon /></QuickButton>
              <QuickButton $w={16} aria-label="עוד"><Caret color="#000" w={8} /></QuickButton>
              <QuickRule />
              <QuickButton $w={32} aria-label="התאמה אישית">
                <svg width="16" height="16">
                  <path d="M0 1h16v2H0zM1 7h14l-7 8z" fill="#000" />
                </svg>
              </QuickButton>
            </QuickBar>
            <TitleArea>
              <Title>Microsoft Excel -</Title>
              <TitleMosaic width="255" height="34">
                {TITLE_BLOCKS.map((row, y) =>
                  row.map((fill, x) => <rect key={`${x}-${y}`} x={x * 17} y={y * 17} width="17" height="17" fill={fill} />)
                )}
              </TitleMosaic>
            </TitleArea>
          </TitleBar>
          <TabRow>
            <FileTab>קובץ</FileTab>
            <RibbonTab $active>בית</RibbonTab>
            {MENU.map((name) => (
              <RibbonTab key={name}>{name}</RibbonTab>
            ))}
            {LATIN_MENU.map((name) => (
              <RibbonTab key={name} $latin>{name}</RibbonTab>
            ))}
          </TabRow>
        </Top>

        <Ribbon>
          <RibbonGroup w={311} title="לוח" launcher>
            <Big w={98} top={6} off art={<PasteIcon />} first="הדבק" caret="#b9bdc4" />
            <Stack $top={7}>
              <TextButton><IconBox><CutIcon /></IconBox>גזור</TextButton>
              <TextButton><IconBox><CopyIcon /></IconBox>העתק<Caret /></TextButton>
              <TextButton><IconBox><BrushIcon /></IconBox>מברשת עיצוב</TextButton>
            </Stack>
          </RibbonGroup>

          <RibbonGroup w={390} pad="21px 6px 0 0" title="גופן" launcher>
            <Stack $gap={19}>
              <ToolRow $h={54}>
                <Field $w={202} $latin>
                  <select aria-label="גופן"><option>FbKtifaPro Reg</option></select>
                  <Caret />
                </Field>
                <Field $w={87} $latin>
                  <select aria-label="גודל גופן"><option>14</option></select>
                  <Caret />
                </Field>
                <Tool aria-label="הגדל גופן"><GrowIcon /></Tool>
                <Tool aria-label="הקטן גופן"><GrowIcon down /></Tool>
              </ToolRow>
              <ToolRow>
                <Tool $w={47} $on aria-label="מודגש"><Letter>B</Letter></Tool>
                <Tool $w={47} aria-label="נטוי"><Letter $italic>I</Letter></Tool>
                <Tool $w={47} aria-label="קו תחתון"><Letter $light $under>U</Letter></Tool>
                <CaretTool />
                <Rule />
                <Tool $w={44} aria-label="גבולות"><BordersIcon /></Tool>
                <CaretTool w={18} />
                <Rule />
                <Tool aria-label="צבע מילוי"><FillIcon /></Tool>
                <CaretTool w={18} />
                <Tool aria-label="צבע גופן"><FontColorIcon /></Tool>
                <CaretTool />
              </ToolRow>
            </Stack>
          </RibbonGroup>

          <RibbonGroup w={529} pad="21px 6px 0 0" title="יישור" launcher>
            <Stack $gap={28}>
              <ToolRow>
                <Tool aria-label="יישור למעלה"><Lines rows={ALIGN.three} height={32} /></Tool>
                <Tool $w={48} $on aria-label="יישור לאמצע"><Lines rows={ALIGN.three} width={34} height={18} /></Tool>
                <Tool $w={44} aria-label="יישור למטה">
                  <svg width="34" height="40">
                    <path d="M0 23h34M2 28h30M0 33h34M3 38h28" stroke="#000" strokeWidth="3" />
                  </svg>
                </Tool>
                <Rule />
                <Tool $w={44} aria-label="כיוון"><AngleIcon /></Tool>
                <CaretTool />
                <Rule />
                <Tool $w={44} aria-label="מימין לשמאל"><PilcrowIcon /></Tool>
                <CaretTool w={20} />
              </ToolRow>
              <ToolRow>
                <Tool aria-label="יישור לימין"><Lines rows={ALIGN.right} /></Tool>
                <Tool $w={48} $on aria-label="מרכוז"><Lines rows={ALIGN.center} /></Tool>
                <Tool $w={44} aria-label="יישור לשמאל"><Lines rows={ALIGN.left} /></Tool>
                <Rule />
                <Tool $w={44} aria-label="הקטן כניסה"><IndentIcon /></Tool>
                <Tool $w={52} aria-label="הגדל כניסה"><IndentIcon left /></Tool>
              </ToolRow>
            </Stack>
            <Rule $h={126} />
            <Stack $gap={20} $top={2}>
              <TextButton><WrapIcon />גלישת טקסט</TextButton>
              <TextButton><MergeIcon />מזג ומרכז<Caret /></TextButton>
            </Stack>
          </RibbonGroup>

          <RibbonGroup w={274} pad="21px 6px 0 0" title="מספר" launcher>
            <Stack $gap={19}>
              <Field $w={264}>
                <select aria-label="תבנית מספר"><option>מספר</option></select>
                <Caret />
              </Field>
              <ToolRow>
                <Tool $w={48} aria-label="תבנית מטבע"><MoneyIcon /></Tool>
                <CaretTool />
                <Tool aria-label="אחוזים"><Percent>%</Percent></Tool>
                <Tool aria-label="פסיק">
                  <svg width="14" height="20"><path d="M1 5a5 5 0 0 1 12 0q0 9-10 14 4-5 4-9-6 0-6-5z" fill="#222" /></svg>
                </Tool>
                <Rule />
                <Tool aria-label="הוסף ספרה"><DecimalIcon left /></Tool>
                <Tool aria-label="הסר ספרה"><DecimalIcon /></Tool>
              </ToolRow>
            </Stack>
          </RibbonGroup>

          <RibbonGroup w={775} title="סגנונות">
            <Big w={110} art={<ConditionalIcon />} first="עיצוב" second="מותנה" />
            <Big w={106} art={<TableStyleIcon />} first="עצב" second="כטבלה" />
            <Gallery>
              <Styles>
                <StyleChip $on $fg="#000" $bg="#fff">Normal</StyleChip>
                <StyleChip $fg="#006100" $bg="#c6efce">טוב</StyleChip>
                <StyleChip $fg="#9c6500" $bg="#ffeb9c">ניטראלי</StyleChip>
                <StyleChip $fg="#9c0006" $bg="#ffc7ce">רע</StyleChip>
              </Styles>
              <Scroller>
                <button aria-label="למעלה"><svg width="12" height="8"><path d="M0 8h12L6 0z" fill="#b9bcc1" /></svg></button>
                <button aria-label="למטה"><Caret w={12} /></button>
                <button aria-label="עוד סגנונות"><svg width="14" height="12"><path d="M0 0h14v2H0zM1 5h12l-6 7z" fill="#606060" /></svg></button>
              </Scroller>
            </Gallery>
          </RibbonGroup>

          <RibbonGroup w={280} pad="0 6px 0 0" title="תאים">
            <Big w={90} art={<InsertCellsIcon />} first="הוסף" />
            <Big w={90} art={<DeleteCellsIcon />} first="מחק" />
            <Big w={90} art={<FormatCellsIcon />} first="עיצוב" />
          </RibbonGroup>

          <GroupBody $pad="8px 10px 0 0">
            <EditIcons />
          </GroupBody>
        </Ribbon>

        <FormulaBar>
          <BarEnd $w={42} aria-label="הרחב">
            <svg width="24" height="18"><path d="M1 1h6l5 7 5-7h6L12 17z" fill="#55585e" /></svg>
          </BarEnd>
          <FormulaField>
            <input aria-label="נוסחה" defaultValue={'=SUMIF(N3:N32,"כן")'} />
            <Mark $thick={9} $inset="-12px auto -18px -22px" $w="493px" />
          </FormulaField>
          <FxButton $w={80} aria-label="הוסף פונקציה">fx</FxButton>
        </FormulaBar>

        <DocTabs>
          <DocButton aria-label="סגור">x</DocButton>
          <DocButton aria-label="רשימה"><Caret color="#000" w={8} /></DocButton>
          <DocTab href="#doc">
            <svg width="118" height="49">
              <path d="M0 2h26l46 47H0z" fill="#e6eaf0" />
              <path d="M50 11h32l35 38H73L50 26z" fill="#e8ebf0" />
              <path d="M0 2h27l45 47M50 12v15M82 10l35 39" fill="none" stroke="#9a9ea4" />
            </svg>
            <span>* חישוב שעות באקס</span>
          </DocTab>
        </DocTabs>

        <SheetArea>
          <Sheet>
            <colgroup>
              <col width="104" />
              {["J", "K", "L", "M", "N"].map((name) => (
                <col key={name} width="309" />
              ))}
              <col width="634" />
              <col width="309" />
              <col />
            </colgroup>
            <thead>
              <tr>
                <Corner>
                  <svg width="57" height="57"><path d="M0 0v57h57z" fill="#bcc1c6" /></svg>
                </Corner>
                {["J", "K", "L", "M", "N", "O", "P", ""].map((name) => (
                  <ColHead key={name} scope="col" $on={name === "N"}>{name}</ColHead>
                ))}
              </tr>
            </thead>
            <tbody>
              <tr>
                <RowHead scope="row" $h={206}>2</RowHead>
                <Cell $bg={theme.tan} $left="#000" $bottom="#000">
                  <HeadMosaic width="1539" height="192">
                    <BlockRows rows={HEAD_BLOCKS} />
                  </HeadMosaic>
                </Cell>
                <Cell $bg="#bfbfbf" $left="#000" $bottom="#000" />
                {["L", "M", "N"].map((name) => (
                  <Cell key={name} $bg={theme.tan} $left="#000" $bottom="#000" />
                ))}
                <Cell />
                <Cell $left="#000" $bottom="#000" />
                <Cell $bg={theme.tan} $left={theme.tan} $bottom="#000" />
              </tr>
              {DATA_ROWS.map((row) => (
                <DataRow key={row.n} {...row} />
              ))}
              <tr>
                <RowHead scope="row" $h={96} $on $edge>33</RowHead>
                <Cell $bg={DARK} $fg="#fff" $left="#000" $bottom="#fff" $size={53} $weight={700}>0:00:00</Cell>
                <Cell $bg={DARK} $fg="#fff" $left="#000" $bottom="#000" $size={52} $weight={700}>0.00%</Cell>
                <Cell $bg={DARK} $fg="#fff" $left="#fff" $bottom="#fff" $size={53} $weight={700}>0</Cell>
                <Cell $bg={DARK} $fg="#fff" $left="#000" $bottom="#fff" $size={53} $weight={700}>0</Cell>
                <Cell $bg={DARK} $fg="#fff" $left="#000" $bottom="#000" $size={53} $weight={700}>
                  0
                  <Selection />
                  <Mark $thick={10} $inset="-34px -28px -27px -65px" />
                </Cell>
                <Cell />
                <Cell />
                <Cell $left="#fff" />
              </tr>
              {[34, 35, 36, 37, 38].map((n) => (
                <tr key={n}>
                  <RowHead scope="row" $h={68}>{n}</RowHead>
                  {["J", "K", "L", "M", "N", "O", "P", "Q"].map((name) => (
                    <Cell key={name} $left={name === "Q" ? "#fff" : undefined} />
                  ))}
                </tr>
              ))}
            </tbody>
          </Sheet>
        </SheetArea>

        <SheetTabs>
          <NavButtons>
            <button aria-label="ראשון"><svg width="14" height="20"><path d="M0 0l10 10L0 20zM11 0h2v20h-2z" fill="#4c515c" /></svg></button>
            <button aria-label="הקודם"><svg width="10" height="20"><path d="M0 0l10 10L0 20z" fill="#4c515c" /></svg></button>
            <button aria-label="הבא"><svg width="10" height="20"><path d="M10 0L0 10l10 10z" fill="#4c515c" /></svg></button>
            <button aria-label="אחרון"><svg width="14" height="20"><path d="M13 0L3 10l10 10zM0 0h2v20H0z" fill="#4c515c" /></svg></button>
          </NavButtons>
          <SheetTab $w={218} $z={5} $pad={18} $fg="#fff" $bg="linear-gradient(#5c5c5c, #8a8a8a)">חישוב שעות</SheetTab>
          <SheetTab $w={221} $z={4} $pad={17} $bg="linear-gradient(#dfe2e7, #eceef1)">סיכום חודשי</SheetTab>
          <SheetTab $w={140} $z={2} $pad={11} $bg="linear-gradient(#dfe2e7, #eceef1)">תרשים1</SheetTab>
          <SheetTab $w={136} $z={3} $pad={10} $bold $bg="#fff">גיליון1</SheetTab>
          <SheetTab $w={36} $z={4} $pad={0} $bg="none" aria-label="גיליון חדש">
            <svg width="36" height="34">
              <path d="M8 9h26v14q0 5-5 5l-3-3-4 5-4-3-4 3-6-5z" fill="#c9d9f4" stroke="#6b8cc8" strokeWidth="2" />
              <path d="M10 0v20M0 10h20M3 3l14 14M17 3L3 17" stroke="#d88a1c" strokeWidth="2" />
              <circle cx="10" cy="10" r="4" fill="#ffe9a0" />
            </svg>
          </SheetTab>
          <HScroll>
            <Grip />
            <ScrollArrow aria-label="גלול ימינה"><svg width="17" height="33"><path d="M0 0l17 16L0 33z" fill="#55575b" /></svg></ScrollArrow>
            <Track />
            <Thumb />
          </HScroll>
        </SheetTabs>

        <StatusBar>
          <span>מוכן</span>
          <StatusRule />
          <svg width="36" height="32">
            <path d="M1 1h34v30H1z" fill="#eef2fa" stroke="#3d5c8f" />
            <path d="M1 1h34v6H1z" fill="#3f76dd" />
            <path d="M6 14h26M6 20h26M6 26h26" stroke="#90a4c8" strokeWidth="3" strokeDasharray="6 3" />
            <circle cx="7" cy="7" r="7" fill="#dd5635" />
          </svg>
          <StatusRule />
        </StatusBar>

        <Taskbar>
          {TASKS.map((task) => (
            <Task key={task.name} $open={task.open} $active={task.active} aria-label={task.name}>
              {task.art}
            </Task>
          ))}
          <Tray>
            <TrayButton aria-label="סמלים מוסתרים">
              <svg width="32" height="18" fill="none" stroke="#fff" strokeWidth="2"><path d="M1 17L16 2l15 15" /></svg>
            </TrayButton>
            <TrayButton aria-label="סוללה">
              <svg width="40" height="28" fill="none" stroke="#fff" strokeWidth="2">
                <path d="M12 6h24v20H8M38 11v10" />
                <path d="M3 0v6M9 0v6M6 14v13" />
                <path d="M1 6h10v4q0 4-5 4t-5-4zM12 13h8v11h-8z" fill="#fff" />
              </svg>
            </TrayButton>
            <TrayButton aria-label="גיבוי">
              <svg width="40" height="28">
                <path d="M8 27q-8 0-8-9 0-6 7-8 3-10 13-10t13 10q7 2 7 8 0 9-8 9z" fill="#fff" />
                <path d="M16 12v11M23 12v11" stroke="#34586f" strokeWidth="4" />
              </svg>
            </TrayButton>
            <TrayButton aria-label="Dropbox"><DropboxIcon /></TrayButton>
            <TrayButton $w={90}>עבר</TrayButton>
            <Clock>
              <div>10:47 PM</div>
              <HebrewDate>י"ט טבת תש"פ</HebrewDate>
            </Clock>
            <Notice aria-label="התראות">
              <svg width="42" height="46">
                <path d="M0 0h41v34H26l-8 10v-10H0z" fill="#fff" />
                <path d="M8 9h25M8 17h25M8 25h16" stroke="#34586f" strokeWidth="2" />
              </svg>
              <Badge>5</Badge>
            </Notice>
            <DesktopEdge />
          </Tray>
        </Taskbar>
      </Window>
    </ThemeProvider>
  );
}
